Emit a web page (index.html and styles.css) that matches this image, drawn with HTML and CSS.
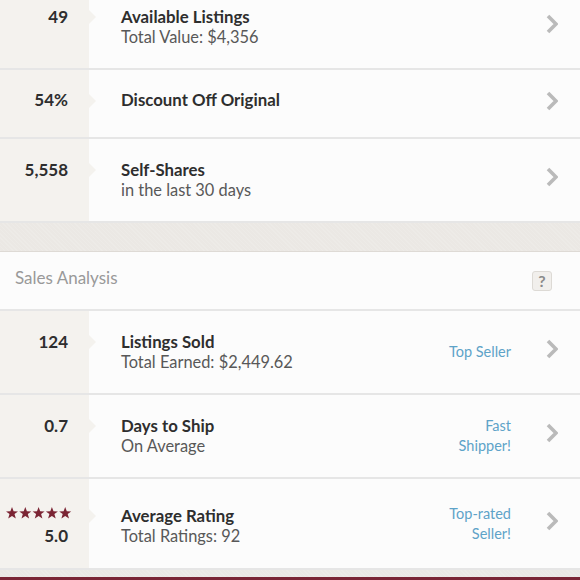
FILE: index.html
```html
<!DOCTYPE html>
<html lang="en">
<head>
    <meta charset="UTF-8">
    <meta name="viewport" content="width=device-width, initial-scale=1.0">
    <title>Closet Stats</title>
    <link rel="stylesheet" href="styles.css">
</head>
<body>
    <main class="stats">
        <section class="stat-group first">
            <a class="row" href="#listings">
                <div class="num">49</div>
                <div class="info">
                    <h3>Available Listings</h3>
                    <p>Total Value: $4,356</p>
                </div>
                <span class="chev"><svg width="12" height="20" viewBox="0 0 12 20"><polyline points="2,2 10,10 2,18" /></svg></span>
            </a>
            <a class="row short" href="#discount">
                <div class="num">54%</div>
                <div class="info">
                    <h3>Discount Off Original</h3>
                </div>
                <span class="chev"><svg width="12" height="20" viewBox="0 0 12 20"><polyline points="2,2 10,10 2,18" /></svg></span>
            </a>
            <a class="row" href="#shares">
                <div class="num">5,558</div>
                <div class="info">
                    <h3>Self-Shares</h3>
                    <p>in the last 30 days</p>
                </div>
                <span class="chev"><svg width="12" height="20" viewBox="0 0 12 20"><polyline points="2,2 10,10 2,18" /></svg></span>
            </a>
        </section>

        <div class="band"></div>

        <section class="stat-group">
            <div class="group-head">
                <h2>Sales Analysis</h2>
                <span class="help">?</span>
            </div>
            <a class="row" href="#sold">
                <div class="num">124</div>
                <div class="info">
                    <h3>Listings Sold</h3>
                    <p>Total Earned: $2,449.62</p>
                </div>
                <span class="badge">Top Seller</span>
                <span class="chev"><svg width="12" height="20" viewBox="0 0 12 20"><polyline points="2,2 10,10 2,18" /></svg></span>
            </a>
            <a class="row" href="#ship">
                <div class="num">0.7</div>
                <div class="info">
                    <h3>Days to Ship</h3>
                    <p>On Average</p>
                </div>
                <span class="badge">Fast<br>Shipper!</span>
                <span class="chev"><svg width="12" height="20" viewBox="0 0 12 20"><polyline points="2,2 10,10 2,18" /></svg></span>
            </a>
            <a class="row rated" href="#rating">
                <div class="num">
                    <svg class="stars" width="66" height="13" viewBox="0 0 66 13">
                        <defs>
                            <polygon id="star" points="6,0 7.6,4.3 12,4.4 8.5,7.1 9.8,11.6 6,9 2.2,11.6 3.5,7.1 0,4.4 4.4,4.3" />
                        </defs>
                        <use href="#star" x="0" />
                        <use href="#star" x="13.3" />
                        <use href="#star" x="26.6" />
                        <use href="#star" x="39.9" />
                        <use href="#star" x="53.2" />
                    </svg>
                    <span>5.0</span>
                </div>
                <div class="info">
                    <h3>Average Rating</h3>
                    <p>Total Ratings: 92</p>
                </div>
                <span class="badge">Top-rated<br>Seller!</span>
                <span class="chev"><svg width="12" height="20" viewBox="0 0 12 20"><polyline points="2,2 10,10 2,18" /></svg></span>
            </a>
        </section>

        <div class="band thin"></div>
        <div class="brand-line"></div>
    </main>
</body>
</html>
```

FILE: styles.css
```css
body {
    margin: 0;
    padding: 0;
    font-family: Lato, "Open Sans", sans-serif;
    background-color: #fcfcfc;
    color: #2e2e2e;
}

.stats {
    margin-top: -14px;
}

.row {
    display: flex;
    min-height: 82px;
    border-bottom: 2px solid #e6e6e6;
    background-color: #fcfcfc;
    color: inherit;
    text-decoration: none;
}

.row.short {
    min-height: 67px;
}

.num {
    position: relative;
    width: 68px;
    padding: 21px 21px 0 0;
    background-color: #f4f2ee;
    text-align: right;
    font-size: 17px;
    font-weight: 700;
    line-height: 20px;
}

/* little pointer from the number column into the row */
.num::after {
    content: "";
    position: absolute;
    top: 24px;
    right: -7px;
    border-top: 7px solid transparent;
    border-bottom: 7px solid transparent;
    border-left: 7px solid #f4f2ee;
}

.row.short .num,
.row.short .info {
    padding-top: 20px;
}

.info {
    flex: 1;
    padding: 21px 0 21px 32px;
}

.info h3 {
    margin: 0;
    font-size: 16.8px;
    font-weight: 700;
    line-height: 20px;
    color: #2e2e2e;
}

.info p {
    margin: 0;
    font-size: 16.4px;
    line-height: 20px;
    color: #585858;
}

.badge {
    align-self: center;
    margin-right: 35px;
    text-align: right;
    font-size: 14.5px;
    line-height: 20px;
    color: #5ea3c8;
}

.chev {
    align-self: center;
    display: flex;
    margin: 0 22px 6px 0;
}

.chev polyline {
    fill: none;
    stroke: #bababa;
    stroke-width: 3.6;
}

.rated {
    min-height: 89px;
}

.rated .num,
.rated .info {
    padding-top: 27px;
}

.rated .num::after {
    top: 30px;
}

.stars {
    display: block;
    margin: 1px -4px 6px auto;
    fill: #7b2534;
}

.rated .num span {
    display: block;
}

.band {
    height: 28px;
    border-bottom: 1px solid #dedad5;
    background-color: #ebe8e4;
    background-image: repeating-linear-gradient(45deg, rgba(255, 255, 255, 0.12) 0 1px, transparent 1px 3px);
}

.band.thin {
    height: 7px;
    border-bottom: none;
}

.brand-line {
    height: 6px;
    background-color: #7b2534;
}

.group-head {
    display: flex;
    align-items: center;
    justify-content: space-between;
    height: 57px;
    padding: 0 28px 0 15px;
    border-bottom: 2px solid #e6e6e6;
}

.group-head h2 {
    margin: 0 0 6px;
    font-size: 17px;
    font-weight: 400;
    color: #999;
}

.help {
    width: 18px;
    height: 18px;
    border: 1px solid #dddad5;
    border-radius: 3px;
    background-color: #f1efec;
    text-align: center;
    font-size: 16px;
    font-weight: 700;
    line-height: 18px;
    color: #8a8a8a;
}
```
